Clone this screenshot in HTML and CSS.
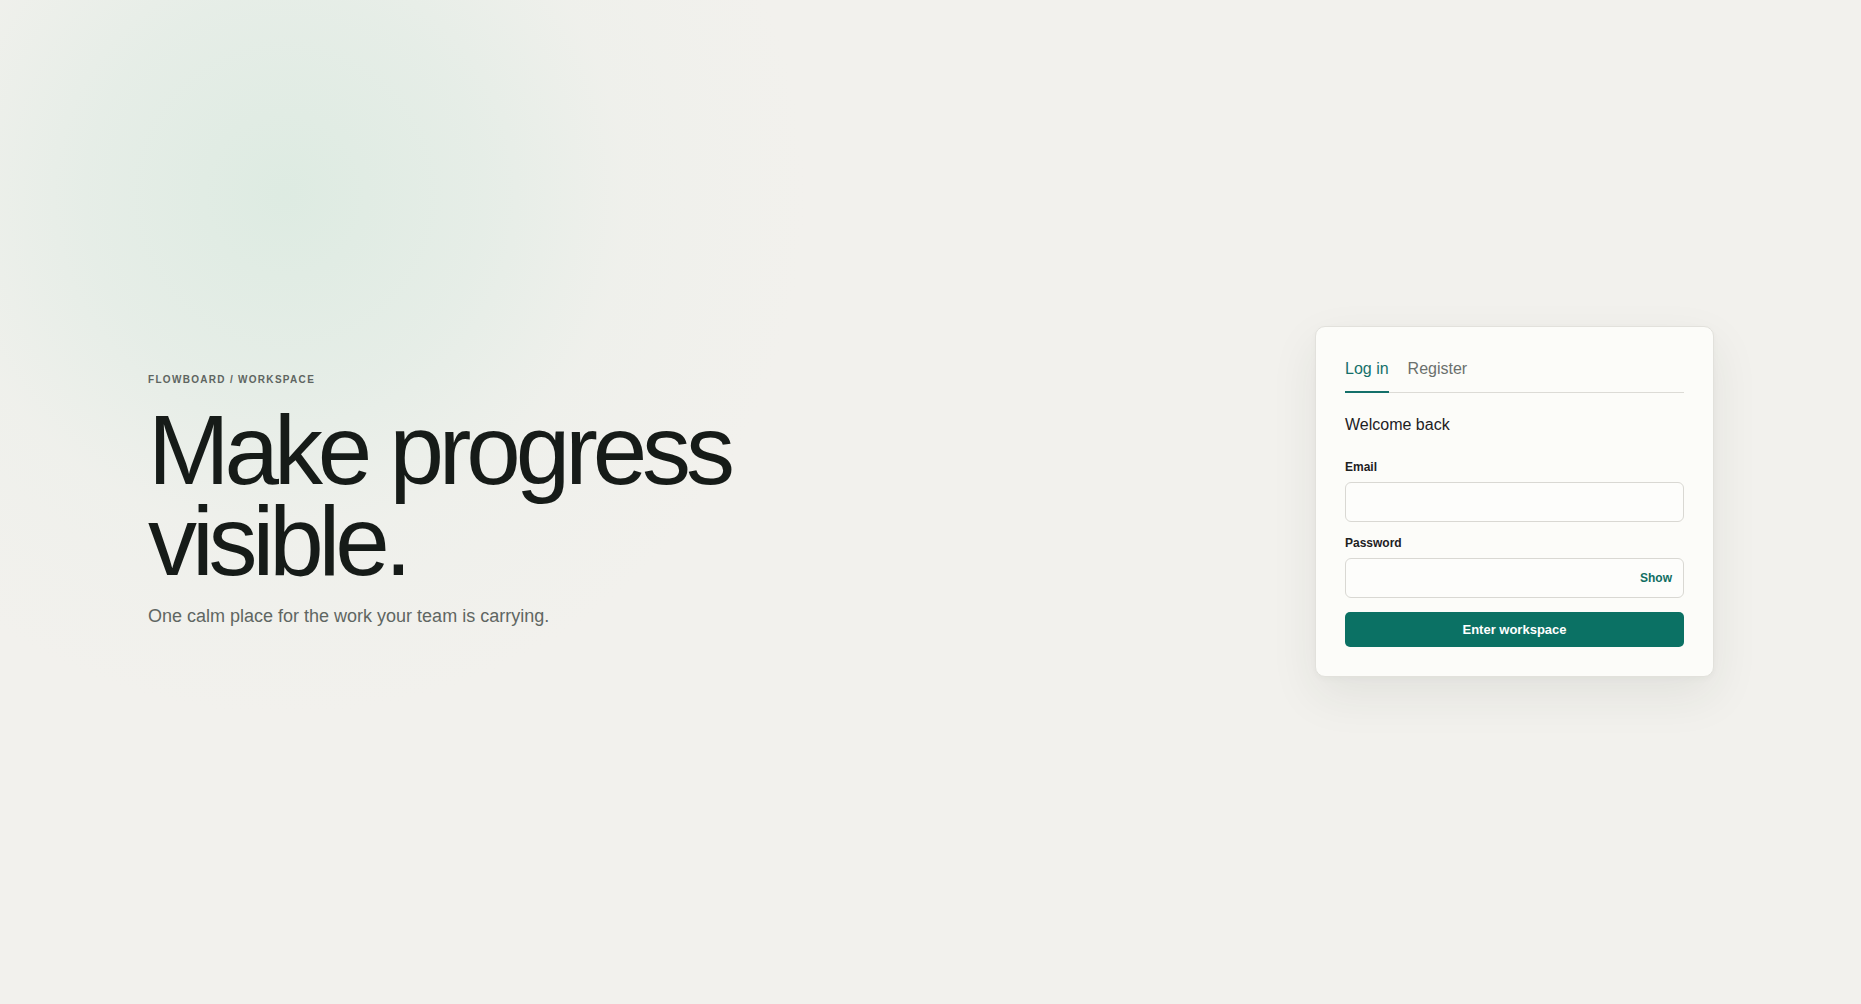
FILE: index.html
```html
<!DOCTYPE html>
<html lang="en">
<head>
<meta charset="utf-8">
<title>Flowboard — Log in</title>
<link rel="stylesheet" href="styles.css">
</head>
<body>
<main class="page">
  <section class="hero">
    <p class="eyebrow">Flowboard / Workspace</p>
    <h1 class="headline"><span class="line">Make progress</span><span class="line">visible.</span></h1>
    <p class="lede">One calm place for the work your team is carrying.</p>
  </section>

  <section class="card">
    <nav class="tabs">
      <button class="tab tab-active" type="button">Log in</button>
      <button class="tab" type="button">Register</button>
    </nav>
    <h2 class="card-title">Welcome back</h2>
    <form class="form">
      <div class="field">
        <label class="label" for="email">Email</label>
        <input class="input" id="email" type="email">
      </div>
      <div class="field">
        <label class="label" for="password">Password</label>
        <div class="input-wrap">
          <input class="input" id="password" type="password">
          <button class="show" type="button">Show</button>
        </div>
      </div>
      <button class="submit" type="button">Enter workspace</button>
    </form>
  </section>
</main>
</body>
</html>
```

FILE: styles.css
```css
* { box-sizing: border-box; }

html, body {
  margin: 0;
  height: 100%;
}

body {
  font-family: "Liberation Sans", Arial, sans-serif;
  color: #1b201d;
  background-color: #f2f1ed;
  background-image:
    radial-gradient(circle at 285px 195px, rgba(218, 234, 224, 0.85) 0px, rgba(222, 235, 227, 0.6) 200px, rgba(232, 238, 232, 0.3) 340px, rgba(242, 241, 237, 0) 520px);
  background-repeat: no-repeat;
}

.page {
  min-height: 100vh;
  display: grid;
  grid-template-columns: 1fr 399px;
  align-items: center;
  padding: 0 147px 0 148px;
}

/* hero */
.hero {
  display: flex;
  flex-direction: column;
}

.eyebrow {
  margin: 0 0 19px;
  font-size: 10px;
  line-height: 12px;
  font-weight: 700;
  letter-spacing: 0.13em;
  text-transform: uppercase;
  color: #5e6561;
}

.headline {
  margin: 0;
  font-size: 98px;
  font-weight: 400;
  letter-spacing: -0.052em;
  color: #161b18;
  display: flex;
  flex-direction: column;
}

.line {
  display: block;
  height: 91px;
  line-height: 91px;
}

.lede {
  margin: 16px 0 0;
  font-size: 18px;
  line-height: 27px;
  color: #5f6662;
}

/* card */
.card {
  align-self: center;
  margin-top: -2px;
  background: #fcfcf9;
  border: 1px solid #e2e1dc;
  border-radius: 10px;
  padding: 30px 29px 29px;
  box-shadow: 0 18px 48px rgba(40, 48, 44, 0.08), 0 2px 6px rgba(40, 48, 44, 0.03);
}

.tabs {
  display: flex;
  gap: 19px;
  border-bottom: 1px solid #dcdbd6;
}

.tab {
  margin: 0 0 -1px;
  padding: 2px 0 12px;
  border: 0;
  border-bottom: 2px solid transparent;
  background: none;
  font: inherit;
  font-size: 16px;
  line-height: 20px;
  color: #6b706d;
  cursor: pointer;
}

.tab-active {
  color: #14706a;
  border-bottom-color: #14706a;
}

.card-title {
  margin: 22px 0 0;
  font-size: 16px;
  line-height: 20px;
  font-weight: 400;
  color: #1d211f;
}

.form {
  display: flex;
  flex-direction: column;
  margin-top: 24px;
}

.field {
  display: flex;
  flex-direction: column;
  margin-bottom: 13.5px;
}

.label {
  font-size: 12px;
  line-height: 16px;
  font-weight: 700;
  color: #1d211f;
  margin-bottom: 7px;
}

.input-wrap {
  position: relative;
}

.input {
  display: block;
  width: 100%;
  height: 40px;
  border: 1px solid #d9d8d3;
  border-radius: 6px;
  background: #fdfdfb;
  font: inherit;
  font-size: 14px;
  padding: 0 12px;
  outline: none;
}

.show {
  position: absolute;
  right: 12px;
  top: 0;
  bottom: 0;
  margin: auto 0;
  height: 20px;
  padding: 0;
  border: 0;
  background: none;
  font: inherit;
  font-size: 12px;
  font-weight: 700;
  color: #0f6e62;
  cursor: pointer;
}

.submit {
  height: 35px;
  border: 0;
  border-radius: 5px;
  background: #0b7164;
  color: #ffffff;
  font: inherit;
  font-size: 13px;
  font-weight: 700;
  cursor: pointer;
}
```
